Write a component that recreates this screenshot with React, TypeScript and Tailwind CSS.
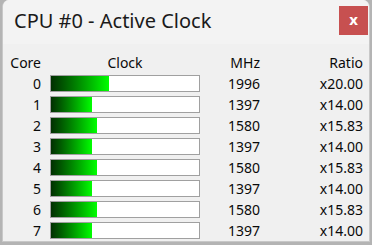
import React from "react";

const rows = [
  { core: 0, mhz: 1996, ratio: "x20.00" },
  { core: 1, mhz: 1397, ratio: "x14.00" },
  { core: 2, mhz: 1580, ratio: "x15.83" },
  { core: 3, mhz: 1397, ratio: "x14.00" },
  { core: 4, mhz: 1580, ratio: "x15.83" },
  { core: 5, mhz: 1397, ratio: "x14.00" },
  { core: 6, mhz: 1580, ratio: "x15.83" },
  { core: 7, mhz: 1397, ratio: "x14.00" },
];

export default function App() {
  return (
    <div
      className="w-[372px] h-[245px] bg-[#b4b4b4] pl-[2px] overflow-hidden"
      style={{ fontFamily: '"Noto Sans", "Open Sans", sans-serif' }}
    >
      <div className="w-[368px] h-[242px] bg-[#f0f0f0] rounded-t-[7px] border border-[#c8c8c8] border-t-0 overflow-hidden text-[#1a1a1a]">
        <div className="h-[44px] bg-[#f3f3f3] flex items-center justify-between pl-[11px] pr-[1px]">
          <span className="text-[20px] leading-none mt-[-2px]">CPU #0 - Active Clock</span>
          <div className="w-[29px] h-[29px] bg-[#c75050] flex items-center justify-center text-white font-bold text-[15px] leading-none mt-[-3px]">
            <span className="mt-[-2px]">x</span>
          </div>
        </div>
        <div className="pt-[8px] text-[14px] text-[#0a0a0a]">
          <div className="flex items-center h-[21px]">
            <div className="w-[38px] text-right">Core</div>
            <div className="ml-[9px] w-[150px] text-center">Clock</div>
            <div className="w-[60px] text-right">MHz</div>
            <div className="w-[103px] text-right">Ratio</div>
          </div>
          {rows.map((r) => (
            <div key={r.core} className="flex items-center h-[21px]">
              <div className="w-[38px] text-right">{r.core}</div>
              <div className="ml-[9px] w-[150px] h-[17px] border border-[#a0a0a0] bg-white">
                <div
                  className="h-full bg-gradient-to-r from-[#003000] to-[#00ff00]"
                  style={{ width: `${Math.round((r.mhz / 5100) * 148)}px` }}
                />
              </div>
              <div className="w-[60px] text-right">{r.mhz}</div>
              <div className="w-[103px] text-right">{r.ratio}</div>
            </div>
          ))}
        </div>
      </div>
    </div>
  );
}
